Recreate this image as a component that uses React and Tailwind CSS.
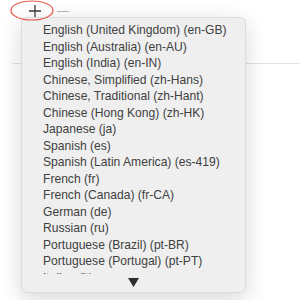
import React from 'react';

const langs = [
  'English (United Kingdom) (en-GB)',
  'English (Australia) (en-AU)',
  'English (India) (en-IN)',
  'Chinese, Simplified (zh-Hans)',
  'Chinese, Traditional (zh-Hant)',
  'Chinese (Hong Kong) (zh-HK)',
  'Japanese (ja)',
  'Spanish (es)',
  'Spanish (Latin America) (es-419)',
  'French (fr)',
  'French (Canada) (fr-CA)',
  'German (de)',
  'Russian (ru)',
  'Portuguese (Brazil) (pt-BR)',
  'Portuguese (Portugal) (pt-PT)',
  'Italian (it)',
];

export default function App() {
  return (
    <div className="relative w-[300px] h-[300px] bg-white overflow-hidden" style={{ fontFamily: '"Liberation Sans", Arial, sans-serif' }}>
      {/* toolbar */}
      <div className="flex items-center h-[21px] pl-[28px] gap-[15px]">
        <svg width="14" height="14" viewBox="0 0 14 14" className="mt-[1px]">
          <path d="M7 1v12M1 7h12" stroke="#3a3a3a" strokeWidth="1.3" />
        </svg>
        <div className="w-[12px] h-[1px] bg-[#b5b5b5] mt-[2px]" />
      </div>
      <div className="ml-[12px] mt-[42px] h-[1px] bg-[#e2e2e2]" />

      {/* red annotation ring */}
      <svg className="absolute left-0 top-0 z-20" width="60" height="24" viewBox="0 0 60 24">
        <ellipse cx="32" cy="10.5" rx="21" ry="9.5" fill="none" stroke="#e8594f" strokeWidth="1.2" />
      </svg>

      {/* dropdown menu */}
      <div className="absolute left-[21px] top-[17px] w-[225px] h-[276px] z-10 rounded-[6px] bg-[#efefef] border border-[#dcdcdc] shadow-[0_6px_22px_rgba(0,0,0,0.16)] flex flex-col">
        <div className="mt-[4px] h-[252px] overflow-hidden">
          {langs.map((l) => (
            <div key={l} className="h-[16.5px] leading-[16.5px] pl-[21px] text-[12.1px] text-[#404040] whitespace-nowrap">
              {l}
            </div>
          ))}
        </div>
        <div className="flex-1 flex items-center justify-center pb-[2px]">
          <svg width="11" height="9" viewBox="0 0 11 9">
            <path d="M0 0h11L5.5 9z" fill="#2e2e2e" />
          </svg>
        </div>
      </div>
    </div>
  );
}
